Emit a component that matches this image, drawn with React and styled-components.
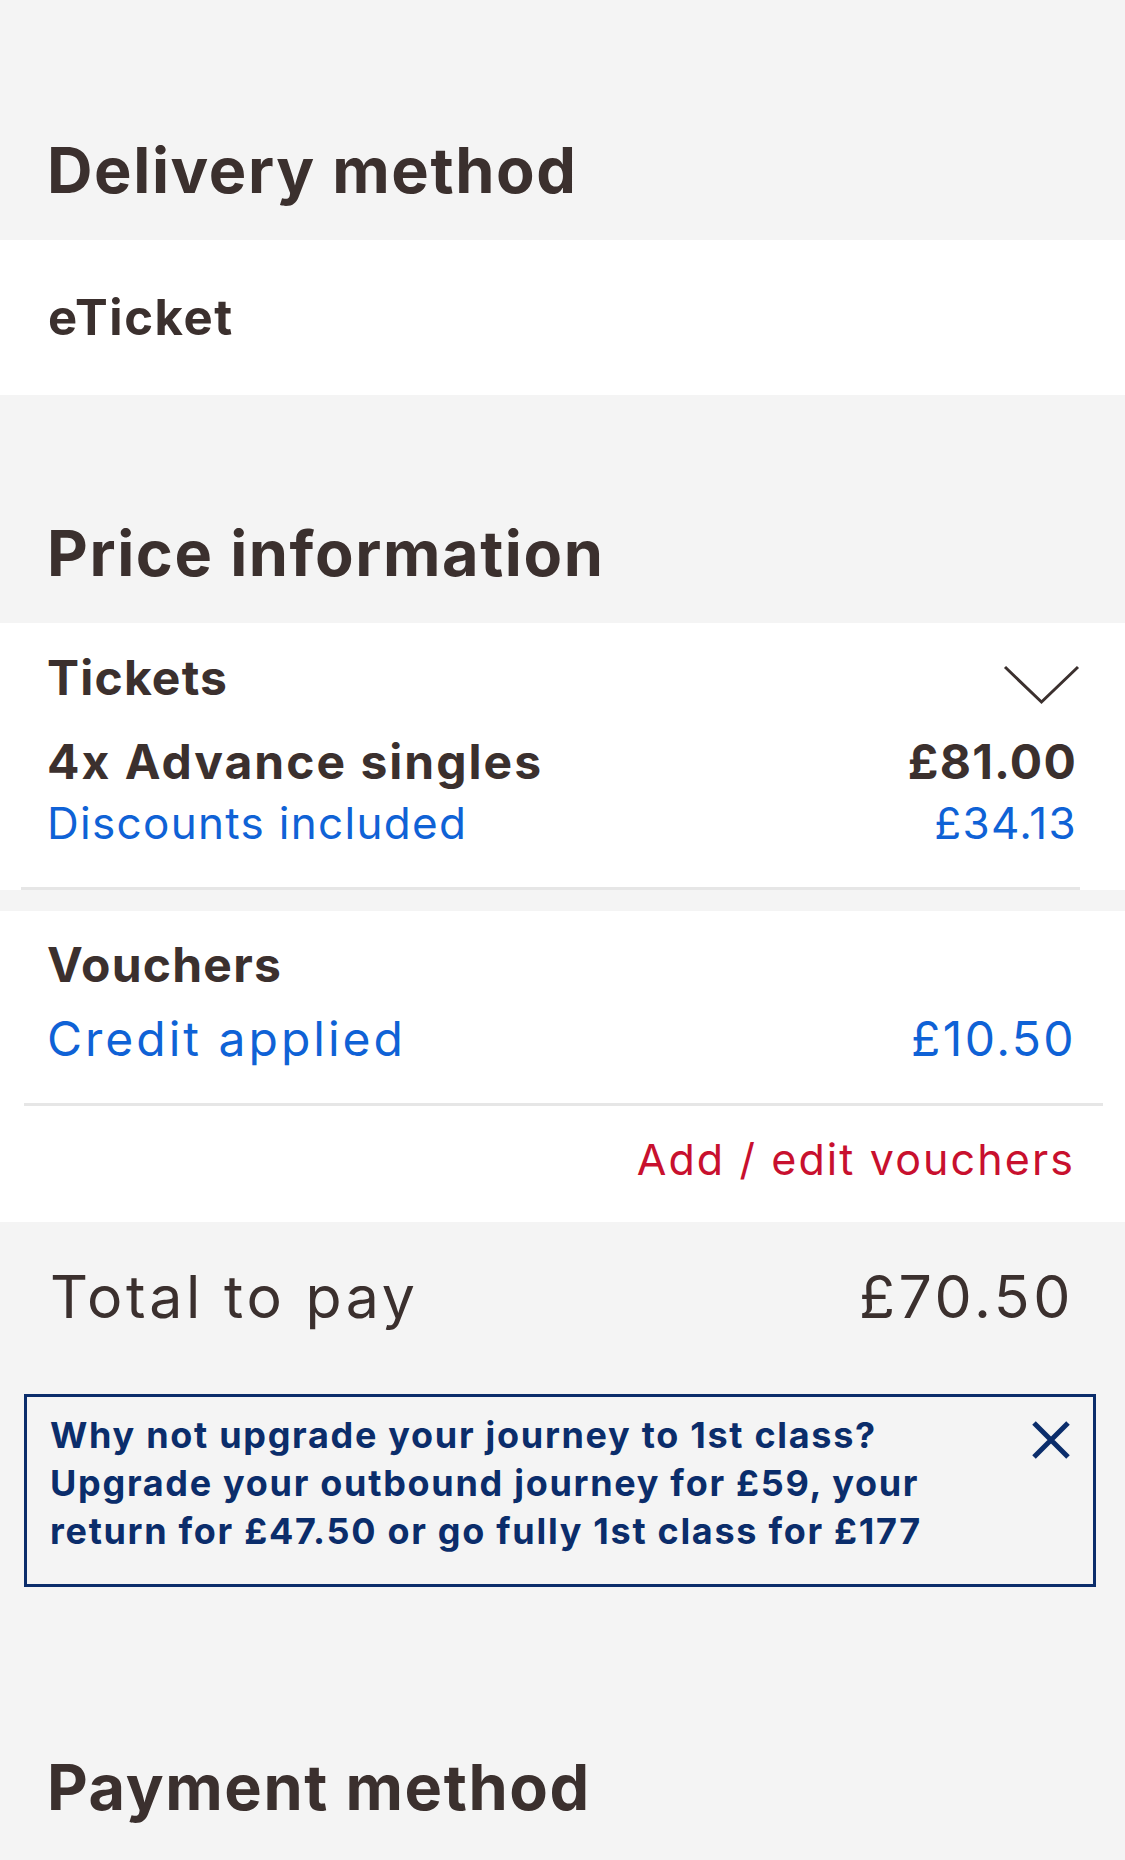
import React from "react";
import styled, { createGlobalStyle } from "styled-components";

const GlobalStyle = createGlobalStyle`
  html, body {
    margin: 0;
    padding: 0;
    background: #f4f4f4;
  }
  body {
    font-family: "Inter", "Lato", "Noto Sans", sans-serif;
    color: #3b302e;
    -webkit-font-smoothing: antialiased;
  }
  * { box-sizing: border-box; }
`;

const Page = styled.div`
  display: flex;
  flex-direction: column;
  width: 1125px;
  background: #f4f4f4;
`;

const SectionTitle = styled.h2`
  margin: 0;
  padding: ${(p) => p.$top}px 47px 30px 47px;
  font-size: 63px;
  line-height: 80px;
  font-weight: 700;
  letter-spacing: 1.6px;
  color: #3b302e;
`;

const Card = styled.div`
  background: #ffffff;
  margin-top: ${(p) => p.$gap || 0}px;
`;

const DeliveryCard = styled(Card)`
  padding: 48px 47px 47px 48px;
`;

const Strong = styled.div`
  font-size: ${(p) => p.$size || 48}px;
  line-height: ${(p) => p.$lh || 56}px;
  font-weight: 700;
  letter-spacing: ${(p) => p.$ls || 1.2}px;
  color: #3b302e;
`;

const TicketsInner = styled.div`
  margin: 0 45px 0 21px;
  padding: 27px 3px 38px 26px;
  border-bottom: 3px solid #e6e6e6;
`;

const Row = styled.div`
  display: flex;
  justify-content: space-between;
  align-items: baseline;
  margin-top: ${(p) => p.$gap || 0}px;
`;

const HeaderRow = styled.div`
  display: flex;
  justify-content: space-between;
  align-items: flex-start;
`;

const Chevron = styled.svg`
  width: 77px;
  height: 40px;
  margin-top: 15px;
  margin-right: -3px;
  flex-shrink: 0;
`;

const Blue = styled.div`
  font-size: ${(p) => p.$size}px;
  line-height: ${(p) => p.$lh}px;
  font-weight: 400;
  letter-spacing: ${(p) => p.$ls}px;
  color: #0f62d6;
`;

const VoucherBody = styled.div`
  padding: 26px 49px 36px 47px;
`;

const Divider = styled.div`
  height: 3px;
  background: #e6e6e6;
  margin: 0 22px 0 24px;
`;

const LinkRow = styled.div`
  display: flex;
  justify-content: flex-end;
  padding: 27px 50px 37px 47px;
`;

const RedLink = styled.a`
  font-size: 43px;
  line-height: 52px;
  font-weight: 400;
  letter-spacing: 2.1px;
  color: #c8102e;
  text-decoration: none;
  cursor: pointer;
`;

const TotalRow = styled.div`
  display: flex;
  justify-content: space-between;
  align-items: baseline;
  padding: 40px 51px 0 50px;
  font-size: 59px;
  line-height: 70px;
  font-weight: 400;
  letter-spacing: 3.6px;
  color: #3b302e;
`;

const UpgradeBox = styled.div`
  display: flex;
  align-items: flex-start;
  gap: 24px;
  margin: 62px 29px 0 24px;
  padding: 14px 22px 29px 23px;
  border: 3px solid #0b2d6b;
`;

const UpgradeText = styled.div`
  flex: 1;
  font-size: 36px;
  line-height: 48px;
  font-weight: 700;
  letter-spacing: 1.7px;
  color: #0b2d6b;
`;

const CloseButton = styled.button`
  flex-shrink: 0;
  width: 40px;
  height: 40px;
  margin-top: 9px;
  padding: 0;
  border: 0;
  background: transparent;
  cursor: pointer;
  display: flex;
`;

export default function App() {
  return (
    <>
      <GlobalStyle />
      <Page>
        <SectionTitle $top={130}>Delivery method</SectionTitle>
        <DeliveryCard>
          <Strong $size={49} $lh={60} $ls={1.6}>eTicket</Strong>
        </DeliveryCard>

        <SectionTitle $top={118}>Price information</SectionTitle>
        <Card>
          <TicketsInner>
            <HeaderRow>
              <Strong>Tickets</Strong>
              <Chevron viewBox="0 0 77 40" fill="none">
                <path d="M2 2 L38.5 37 L75 2" stroke="#3b302e" strokeWidth="3" />
              </Chevron>
            </HeaderRow>
            <Row $gap={28}>
              <Strong $ls={2}>4x Advance singles</Strong>
              <Strong>£81.00</Strong>
            </Row>
            <Row $gap={7}>
              <Blue $size={44} $lh={52} $ls={1.3}>Discounts included</Blue>
              <Blue $size={44} $lh={52} $ls={1.3}>£34.13</Blue>
            </Row>
          </TicketsInner>
        </Card>

        <Card $gap={21}>
          <VoucherBody>
            <Strong>Vouchers</Strong>
            <Row $gap={18}>
              <Blue $size={48} $lh={56} $ls={3}>Credit applied</Blue>
              <Blue $size={48} $lh={56} $ls={2.4}>£10.50</Blue>
            </Row>
          </VoucherBody>
          <Divider />
          <LinkRow>
            <RedLink>Add / edit vouchers</RedLink>
          </LinkRow>
        </Card>

        <TotalRow>
          <span>Total to pay</span>
          <span>£70.50</span>
        </TotalRow>

        <UpgradeBox>
          <UpgradeText>
            Why not upgrade your journey to 1st class?
            <br />
            Upgrade your outbound journey for £59, your return for £47.50 or go fully 1st class for £177
          </UpgradeText>
          <CloseButton aria-label="Close">
            <svg width="40" height="40" viewBox="0 0 40 40" fill="none">
              <path d="M3 3 L37 37 M37 3 L3 37" stroke="#0b2d6b" strokeWidth="5" />
            </svg>
          </CloseButton>
        </UpgradeBox>

        <SectionTitle $top={160}>Payment method</SectionTitle>
      </Page>
    </>
  );
}
